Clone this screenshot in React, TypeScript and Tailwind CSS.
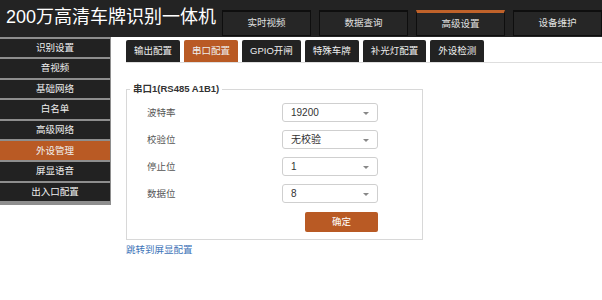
const navItems = ['实时视频', '数据查询', '高级设置', '设备维护']
const sideItems = ['识别设置', '音视频', '基础网络', '白名单', '高级网络', '外设管理', '屏显语音', '出入口配置']
const tabs = ['输出配置', '串口配置', 'GPIO开闸', '特殊车牌', '补光灯配置', '外设检测']
const rows = [
  { label: '波特率', value: '19200' },
  { label: '校验位', value: '无校验' },
  { label: '停止位', value: '1' },
  { label: '数据位', value: '8' },
]

const font = { fontFamily: '"Liberation Sans", "Noto Sans CJK SC", sans-serif' }

function Select({ value }: { value: string }) {
  return (
    <div className="relative flex items-center w-[96px] h-[19px] bg-white border border-[#cfcfcf] rounded-[3px] pl-[8px] text-[10px] text-[#333]">
      {value}
      <span className="absolute right-[8px] top-[8px] w-0 h-0 border-l-[3px] border-r-[3px] border-t-[3px] border-l-transparent border-r-transparent border-t-[#888]" />
    </div>
  )
}

export default function App() {
  return (
    <div className="w-[602px] h-[300px] bg-white overflow-hidden" style={font}>
      {/* header */}
      <div className="flex items-end h-[37px] bg-[#232323] pb-[1px]">
        <div className="self-center pl-[6px] text-[18px] leading-none text-white w-[224px] whitespace-nowrap -mt-[3px]">
          200万高清车牌识别一体机
        </div>
        <div className="flex gap-[8px]">
          {navItems.map(item => (
            <div
              key={item}
              className={`flex items-center justify-center w-[89px] h-[26px] bg-[#262626] border border-[#0e0e0e] text-[9.5px] text-[#e0e0e0] ${
                item === '高级设置' ? 'border-t-[3px] border-t-[#c0622a]' : 'border-t-[2px]'
              }`}
            >
              {item}
            </div>
          ))}
        </div>
      </div>

      <div className="flex">
        {/* sidebar */}
        <div className="w-[111px] h-[168px] bg-[#8e8e8e] pt-[1.5px] pr-[1px] flex flex-col gap-[2px]">
          {sideItems.map(item => (
            <div
              key={item}
              className={`flex items-center justify-center h-[18.6px] text-[9.5px] text-[#f0f0f0] ${
                item === '外设管理' ? 'bg-[#b95a24]' : 'bg-[#222222]'
              }`}
            >
              {item}
            </div>
          ))}
        </div>

        {/* content */}
        <div className="flex-1 pl-[15px]">
          <div className="flex gap-[4px] pt-[3px] border-b border-[#dedede]">
            {tabs.map(tab => (
              <div
                key={tab}
                className={`flex items-center h-[22px] px-[8px] text-[9.5px] text-[#eee] rounded-t-[2px] ${
                  tab === '串口配置' ? 'bg-[#b95a24]' : 'bg-[#222222]'
                }`}
              >
                {tab}
              </div>
            ))}
          </div>

          <fieldset className="mt-[19px] w-[297px] border border-[#d8d8d8] pb-[7px]">
            <legend className="ml-[3px] px-[3px] text-[9.5px] font-bold text-[#333]">
              串口1(RS485 A1B1)
            </legend>
            <div className="flex flex-col gap-[8px] mt-[7px]">
              {rows.map(row => (
                <div key={row.label} className="flex items-center">
                  <div className="w-[155px] pl-[20px] text-[9.5px] text-[#555]">{row.label}</div>
                  <Select value={row.value} />
                </div>
              ))}
            </div>
            <div className="flex mt-[9px] pl-[178px]">
              <button className="w-[73px] h-[20px] bg-[#b95a24] rounded-[2px] text-[9.5px] text-white">
                确定
              </button>
            </div>
          </fieldset>

          <div className="mt-[3px] text-[9.5px] text-[#3e74b8]">跳转到屏显配置</div>
        </div>
      </div>
    </div>
  )
}
